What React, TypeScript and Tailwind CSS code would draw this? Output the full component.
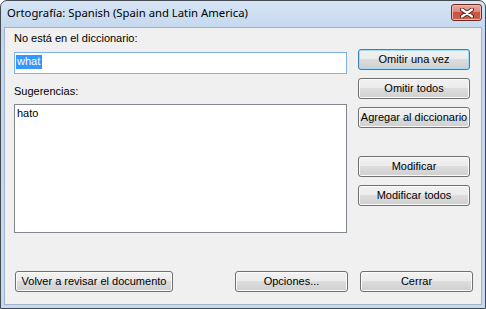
import React from "react";
import clsx from "clsx";

type BtnProps = {
  children: React.ReactNode;
  className?: string;
  primary?: boolean;
};

// botón estilo Windows 7
const Btn: React.FC<BtnProps> = ({ children, className, primary }) => (
  <button
    className={clsx(
      "h-[21px] rounded-[3px] border text-[11px] leading-[13px] text-black font-['Liberation_Sans',Arial,sans-serif]",
      "bg-[linear-gradient(#f2f2f2_0%,#ebebeb_50%,#dddddd_50%,#cfcfcf_100%)]",
      primary
        ? "border-[#3c7fb1] shadow-[inset_0_0_0_1px_#9fdcf6]"
        : "border-[#707070] shadow-[inset_0_0_0_1px_#fbfbfb]",
      className
    )}
  >
    {children}
  </button>
);

const CloseIcon = () => (
  <svg width="14" height="10" viewBox="0 0 14 10">
    <path
      d="M2 1.5 L12 8.5 M12 1.5 L2 8.5"
      stroke="#5a1c16"
      strokeWidth="4"
      strokeLinecap="round"
    />
    <path
      d="M2 1.5 L12 8.5 M12 1.5 L2 8.5"
      stroke="#ffffff"
      strokeWidth="2.2"
      strokeLinecap="round"
    />
  </svg>
);

export default function App() {
  return (
    <div className="w-[486px] h-[309px] bg-white">
      <div className="w-full h-full flex flex-col rounded-t-[7px] border border-[#434a52] bg-[linear-gradient(#d7e5f5,#c3d7ee_30px,#c5d9ef)] font-['Liberation_Sans',Arial,sans-serif]">
        {/* barra de título */}
        <div className="h-[26px] flex items-center justify-between pl-[6px] pr-[3px]">
          <span className="text-[11.3px] text-black font-['Noto_Sans',sans-serif] -mt-[1px]">
            Ortografía: Spanish (Spain and Latin America)
          </span>
          <div className="w-[31px] h-[17px] -mt-[3px] rounded-[3px] border border-[#6e2a22] flex items-center justify-center bg-[linear-gradient(#e9a99d_0%,#d98a7c_45%,#c8523f_50%,#c7634d_100%)] shadow-[inset_0_0_0_1px_#f0b9ae]">
            <CloseIcon />
          </div>
        </div>

        {/* área de cliente */}
        <div className="flex-1 mx-[3px] mb-[3px] border border-[#9fb3cb] bg-[#f0f0f0] flex flex-col pl-[9px] text-[11px] leading-[13px] text-black">
          <div className="flex">
            <div className="w-[333px] flex flex-col">
              <div className="mt-[4px]">No está en el diccionario:</div>
              <div className="mt-[7px] h-[22px] border border-[#7eb4ea] bg-white pl-[1px] pt-[2px] flex">
                <span className="bg-[#3399ff] text-white h-[14px] leading-[13px] px-[1px]">
                  what
                </span>
                <span className="w-[1px] h-[14px] bg-[#d86b10]" />
              </div>
              <div className="mt-[11px]">Sugerencias:</div>
              <div className="mt-[6px] h-[129px] border border-[#828790] bg-white pl-[2px] pt-[2px]">
                hato
              </div>
            </div>
            <div className="ml-[11px] w-[112px] flex flex-col">
              <Btn primary className="mt-[21px]">
                Omitir una vez
              </Btn>
              <Btn className="mt-[8px]">Omitir todos</Btn>
              <Btn className="mt-[8px]">Agregar al diccionario</Btn>
              <Btn className="mt-[28px]">Modificar</Btn>
              <Btn className="mt-[8px]">Modificar todos</Btn>
            </div>
          </div>
          <div className="flex mt-[38px]">
            <Btn className="ml-[1px] w-[158px]">Volver a revisar el documento</Btn>
            <Btn className="ml-[62px] w-[113px]">Opciones...</Btn>
            <Btn className="ml-[12px] w-[113px]">Cerrar</Btn>
          </div>
        </div>
      </div>
    </div>
  );
}
